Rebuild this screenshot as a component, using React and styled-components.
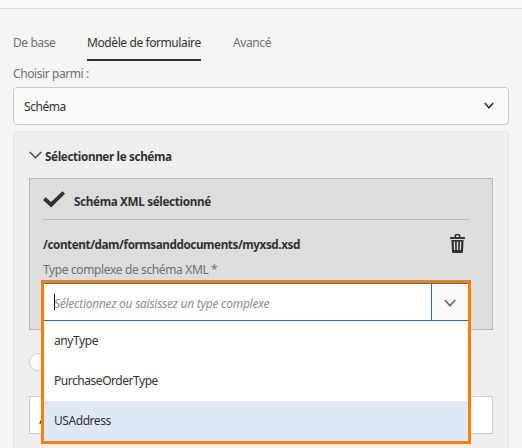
import React from "react";
import styled, { createGlobalStyle } from "styled-components";

const Global = createGlobalStyle`
  * { box-sizing: border-box; }
  html, body { margin: 0; height: 448px; overflow: hidden; background: #f5f5f5; }
  body { font: 12px/20px "Noto Sans", "Open Sans", sans-serif; color: #323232; }
  svg { display: block; flex: none; }
`;

const Page = styled.main`
  position: relative;
  width: 522px;
  height: 448px;
  overflow: hidden;
`;

const TopBar = styled.header`
  height: 9px;
  background: #fafafa;
  border-bottom: 1px solid #e0e0e0;
`;

const Text = styled.span`
  display: inline-block;
  white-space: nowrap;
  font-size: ${(p) => (p.$bold ? 11.7 : 12)}px;
  letter-spacing: ${(p) => p.$track || 0}px;
  font-weight: ${(p) => (p.$bold ? 700 : 400)};
  font-style: ${(p) => (p.$italic ? "italic" : "normal")};
  color: ${(p) => p.$color || "inherit"};
`;

const Tabs = styled.nav`
  display: flex;
  gap: 32px;
  height: 52px;
  padding: 24px 13px 0;
`;

const Tab = styled.a`
  width: ${(p) => p.$width}px;
  height: 28px;
  color: ${(p) => (p.$active ? "#323232" : "#707070")};
  border-bottom: 2px solid ${(p) => (p.$active ? "#323232" : "transparent")};
`;

const FieldLabel = styled.div`
  height: 26px;
  padding: 3px 13px 0;
  color: #707070;
`;

const Select = styled.div`
  display: flex;
  align-items: center;
  justify-content: space-between;
  width: 496px;
  height: 38px;
  margin-left: 13px;
  padding: 2px 14px 0 10px;
  background: #fafafa;
  border: 1px solid #cbcbcb;
  border-radius: 4px;

  svg { margin-bottom: 4px; }
`;

const Panel = styled.section`
  width: 496px;
  height: 340px;
  margin: 6px 0 0 13px;
  padding: 0 15px;
  background: #efefef;
  border: 1px solid #e6e6e6;
  border-radius: 4px;
`;

const PanelHeader = styled.div`
  display: flex;
  align-items: center;
  gap: 3px;
  height: 46px;
  padding-top: 1px;

  svg { margin-bottom: 1px; }
`;

const SchemaBox = styled.div`
  height: 152px;
  padding: 0 23px 0 13px;
  background: #dddddd;
  border: 1px solid #b8b8b8;
`;

const Status = styled.div`
  display: flex;
  align-items: center;
  gap: 9px;
  height: 41px;
  padding-top: 4px;
  border-bottom: 1px solid #b8b8b8;

  svg { margin-bottom: 3px; }
`;

const FileRow = styled.div`
  display: flex;
  align-items: center;
  justify-content: space-between;
  height: 40px;
  padding: 8px 4px 0 0;

  svg { margin-bottom: 2px; }
`;

const TypeLabel = styled.div`
  height: 20px;
  color: #707070;
`;

const Radio = styled.div`
  width: 18px;
  height: 18px;
  margin-top: 23px;
  background: #fafafa;
  border: 1px solid #d0d0d0;
  border-radius: 50%;
`;

const PathInput = styled.div`
  display: flex;
  align-items: center;
  height: 38px;
  margin-top: 25px;
  padding: 13px 0 0 9px;
  background: #fff;
  border: 1px solid #cbcbcb;
`;

const ComboOverlay = styled.div`
  position: absolute;
  left: 41px;
  top: 280px;
  width: 430px;
  height: 164px;
  background: #fff;
  border: 3px solid #ff8000;
`;

const ComboField = styled.div`
  display: flex;
  height: 38px;
  border: solid #326ec8;
  border-width: 1px 0;
`;

const ComboInput = styled.div`
  display: flex;
  align-items: center;
  flex: 1;
  padding: 3px 0 0 10px;
`;

const Caret = styled.i`
  width: 1px;
  height: 16px;
  margin: -4px -1px 0 0;
  background: #000;
`;

const ComboButton = styled.div`
  display: flex;
  align-items: center;
  justify-content: center;
  width: 37px;
  padding-top: 1px;
  background: #fafafa;
  border-left: 1px solid #326ec8;
  border-top-right-radius: 3px;
`;

const Option = styled.div`
  height: 40px;
  padding: 10px 10px 0;
  background: ${(p) => (p.$active ? "#dfe8f7" : "#fff")};
`;

const Chevron = ({ width, height, stroke, color }) => (
  <svg width={width} height={height} viewBox={`0 0 ${width} ${height}`} fill="none">
    <path
      d={`M0.8 1 L${width / 2} ${height - 1.3} L${width - 0.8} 1`}
      stroke={color}
      strokeWidth={stroke}
    />
  </svg>
);

const CheckIcon = () => (
  <svg width="22" height="17" viewBox="0 0 22 17">
    <path d="M0 9 L2.7 6.2 L8 11 L19.5 0.2 L22 2.7 L8.2 16.4 Z" fill="#323232" />
  </svg>
);

const TrashIcon = () => (
  <svg width="15" height="19" viewBox="0 0 15 19" fill="#323232">
    <path d="M4.5 3 V1.6 Q4.7 0 6 0 H9 Q10.3 0 10.5 1.6 V3 H14.2 Q15 3 15 4 V5 H0 V4 Q0 3 0.8 3 Z M6 3 H9 V1.5 H6 Z" fillRule="evenodd" />
    <path
      d="M1.4 6 H13.6 L13 18 Q12.9 19 12 19 H3 Q2.1 19 2 18 Z M3.7 7.5 L4 16 H5.2 L5 7.5 Z M6.8 7.5 V16 H8.2 V7.5 Z M10 7.5 L9.8 16 H11 L11.3 7.5 Z"
      fillRule="evenodd"
    />
  </svg>
);

const CornerMark = () => (
  <svg width="5" height="4" viewBox="0 0 5 4">
    <path d="M0 3.5 L2 0 H5 V3.5 Z" fill="#323232" />
  </svg>
);

const TYPES = [
  { name: "anyType", track: -0.4 },
  { name: "PurchaseOrderType", track: -0.46 },
  { name: "USAddress", track: -0.44, active: true },
];

export default function App() {
  return (
    <Page>
      <Global />
      <TopBar />
      <Tabs>
        <Tab $width={42}><Text $track={-0.42}>De base</Text></Tab>
        <Tab $width={114} $active><Text $track={-0.41}>Modèle de formulaire</Text></Tab>
        <Tab $width={40}><Text $track={-0.4}>Avancé</Text></Tab>
      </Tabs>
      <FieldLabel><Text $track={-0.42}>Choisir parmi :</Text></FieldLabel>
      <Select>
        <Text $track={-0.45}>Schéma</Text>
        <Chevron width={10} height={7} stroke={1.6} color="#323232" />
      </Select>
      <Panel>
        <PanelHeader>
          <Chevron width={13} height={8} stroke={1.5} color="#4b4b4b" />
          <Text $bold $track={-0.36}>Sélectionner le schéma</Text>
        </PanelHeader>
        <SchemaBox>
          <Status>
            <CheckIcon />
            <Text $bold $track={-0.34}>Schéma XML sélectionné</Text>
          </Status>
          <FileRow>
            <Text $bold $track={-0.42}>/content/dam/formsanddocuments/myxsd.xsd</Text>
            <TrashIcon />
          </FileRow>
          <TypeLabel><Text $track={-0.37}>Type complexe de schéma XML *</Text></TypeLabel>
        </SchemaBox>
        <Radio />
        <PathInput><CornerMark /></PathInput>
      </Panel>
      <ComboOverlay>
        <ComboField>
          <ComboInput>
            <Caret />
            <Text $italic $color="#8e8e8e" $track={-0.27}>Sélectionnez ou saisissez un type complexe</Text>
          </ComboInput>
          <ComboButton>
            <Chevron width={12} height={8} stroke={1.8} color="#6e6e6e" />
          </ComboButton>
        </ComboField>
        {TYPES.map((t) => (
          <Option key={t.name} $active={t.active}>
            <Text $track={t.track}>{t.name}</Text>
          </Option>
        ))}
      </ComboOverlay>
    </Page>
  );
}
